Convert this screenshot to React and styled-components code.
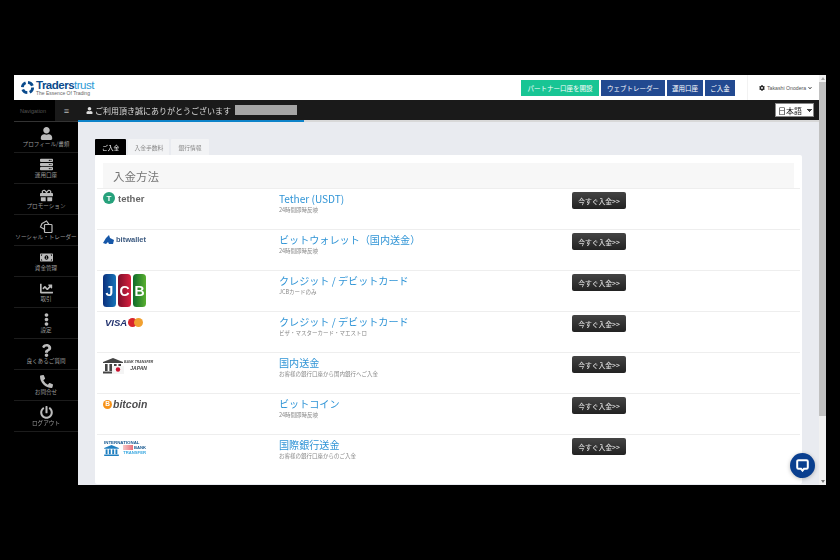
import React from "react";
import styled, { createGlobalStyle } from "styled-components";
import {
  FaUser, FaServer, FaGift, FaMoneyBillAlt, FaChartLine,
  FaEllipsisV, FaQuestion, FaPhoneAlt, FaPowerOff, FaCog, FaChevronDown,
} from "react-icons/fa";

const GlobalStyle = createGlobalStyle`
  html, body {
    margin: 0;
    padding: 0;
    background: #000;
    overflow: hidden;
  }
  * { box-sizing: border-box; }
`;

const font = `"Noto Sans CJK JP", "Noto Sans", "Liberation Sans", sans-serif`;

const Letterbox = styled.div`
  width: 840px;
  height: 560px;
  padding: 75px 14px;
  background: #000;
  font-family: ${font};
`;

const Screen = styled.div`
  position: relative;
  width: 812px;
  height: 410px;
  display: flex;
  overflow: hidden;
  filter: blur(0.35px);
`;

const Main = styled.div`
  flex: 1;
  display: flex;
  flex-direction: column;
  min-width: 0;
`;

const Body = styled.div`
  flex: 1;
  display: flex;
  min-height: 0;
`;

const Page = styled.div`
  flex: 1;
  display: flex;
  flex-direction: column;
  min-width: 0;
`;

const Scrollbar = styled.div`
  width: 7px;
  background: #f1f1f1;
  display: flex;
  flex-direction: column;
  align-items: center;
  padding-top: 2px;
`;

const Arrow = styled.div`
  width: 0;
  height: 0;
  border-left: 2px solid transparent;
  border-right: 2px solid transparent;
  ${(p) => (p.$down ? "border-top: 3px solid #777; margin-top: auto; margin-bottom: 2px;" : "border-bottom: 3px solid #aaa;")}
`;

const Thumb = styled.div`
  width: 7px;
  height: 334px;
  margin-top: 2px;
  background: #c1c1c1;
`;

const Header = styled.div`
  height: 25px;
  flex-shrink: 0;
  background: #fff;
  display: flex;
  align-items: center;
  padding-left: 6px;
`;

const Logo = styled.div`
  display: flex;
  align-items: center;
  gap: 1px;
`;

const LogoText = styled.div`
  display: flex;
  flex-direction: column;
  font-family: "Liberation Sans", sans-serif;
`;

const LogoName = styled.span`
  font-size: 11.5px;
  line-height: 13px;
  height: 11px;
  font-weight: 700;
  letter-spacing: -0.5px;
  color: #0a4a8c;
  span { color: #2b9ad6; font-weight: 400; }
`;

const LogoTag = styled.span`
  font-size: 5px;
  line-height: 6px;
  color: #666;
`;

const HeaderRight = styled.div`
  margin-left: auto;
  display: flex;
  align-items: center;
  gap: 2px;
  height: 100%;
`;

const HeaderButton = styled.div`
  width: ${(p) => p.$w}px;
  height: 16px;
  background: ${(p) => p.$bg || "#17408b"};
  color: #fff;
  opacity: 0.95;
  font-size: 6.5px;
  display: flex;
  align-items: center;
  justify-content: center;
  white-space: nowrap;
`;

const UserMenu = styled.div`
  width: 72px;
  height: 100%;
  margin-left: 10px;
  padding-left: 11px;
  border-left: 1px solid #f2f2f2;
  display: flex;
  align-items: center;
  gap: 2px;
  font-size: 5.2px;
  color: #555;
  font-family: "Liberation Sans", sans-serif;
  white-space: nowrap;
  svg { color: #222; flex-shrink: 0; }
`;

const TopBar = styled.div`
  height: 22px;
  flex-shrink: 0;
  background: #1a1a1a;
  display: flex;
  align-items: center;
  padding: 0 5px 0 8px;
  color: #ddd;
  font-size: 8px;
  gap: 2px;
  border-bottom: 2px solid #d8d8d8;
  position: relative;
  &::after {
    content: "";
    position: absolute;
    left: 0;
    bottom: -2px;
    width: 226px;
    height: 2px;
    background: #0d83c9;
  }
`;

const Redacted = styled.span`
  width: 62px;
  height: 10px;
  margin-left: 2px;
  background: #a5a5a5;
`;

const LangSelect = styled.select`
  appearance: none;
  margin-left: auto;
  width: 39px;
  height: 14px;
  padding: 0 0 0 2px;
  font-family: ${font};
  font-size: 8px;
  border: 1px solid #888;
  border-radius: 0;
  color: #222;
  background:
    linear-gradient(45deg, transparent 50%, #444 50%) right 4px center / 3px 3px no-repeat,
    linear-gradient(-45deg, transparent 50%, #444 50%) right 1px center / 3px 3px no-repeat,
    #fff;
`;

const Sidebar = styled.div`
  width: 64px;
  flex-shrink: 0;
  background: #000;
  display: flex;
  flex-direction: column;
`;

const SideTop = styled.div`
  height: 22px;
  display: flex;
  color: #555;
  font-size: 5.5px;
  font-family: "Liberation Sans", sans-serif;
  border-bottom: 1px solid #333;
`;

const SideLabel = styled.div`
  width: 41px;
  display: flex;
  align-items: center;
  padding-left: 6px;
`;

const Burger = styled.div`
  flex: 1;
  background: #1a1a1a;
  display: flex;
  align-items: center;
  justify-content: center;
  color: #bbb;
  font-size: 9px;
`;

const SideItem = styled.div`
  height: 31px;
  border-bottom: 1px solid #1c1c1c;
  display: flex;
  flex-direction: column;
  align-items: center;
  padding-top: 5px;
  color: #9a9a9a;
  font-size: 5.6px;
  line-height: 7px;
  white-space: nowrap;
  svg { color: #bcbcbc; display: block; height: 13px; margin-bottom: 1px; }
`;

const Content = styled.div`
  flex: 1;
  background: #e9ebf0;
  padding: 17px 17px 0;
  min-height: 0;
`;

const Tabs = styled.div`
  display: flex;
  gap: 2px;
`;

const Tab = styled.div`
  height: 16px;
  padding: 0 ${(p) => p.$pad}px;
  display: flex;
  align-items: center;
  font-size: 5.8px;
  border-radius: 1px 1px 0 0;
  background: ${(p) => (p.$active ? "#000" : "#f2f3f5")};
  color: ${(p) => (p.$active ? "#fff" : "#888")};
`;

const Panel = styled.div`
  background: #fff;
  height: 329px;
  padding: 8px 2px 0;
  border-radius: 2px;
`;

const Heading = styled.div`
  height: 25px;
  margin: 0 6px;
  padding-left: 10px;
  background: #f7f7f7;
  color: #777;
  font-size: 11.5px;
  display: flex;
  align-items: center;
`;

const Row = styled.div`
  height: 41px;
  border-top: 1px solid #eee;
  display: grid;
  grid-template-columns: 182px 293px 1fr;
  align-items: start;
`;

const LogoCell = styled.div`
  padding: 3px 0 0 6px;
`;

const Method = styled.div`
  padding-top: 2px;
`;

const MethodTitle = styled.div`
  color: #2f94d6;
  font-size: 10.1px;
  line-height: 15px;
`;

const MethodSub = styled.div`
  color: #888;
  font-size: 5.5px;
  line-height: 8px;
`;

const DepositButton = styled.div`
  margin-top: 3px;
  width: 54px;
  height: 17px;
  background: linear-gradient(#444, #222);
  border-radius: 2px;
  color: #d8d8d8;
  font-size: 6.8px;
  font-weight: 500;
  display: flex;
  align-items: center;
  justify-content: center;
`;

const TetherLogo = styled.div`
  display: flex;
  align-items: center;
  gap: 3px;
  font-family: "Liberation Sans", sans-serif;
  font-size: 9.5px;
  font-weight: 700;
  color: #666;
`;

const TetherMark = styled.span`
  width: 12px;
  height: 12px;
  border-radius: 50%;
  background: #26a17b;
  color: #fff;
  font-size: 8px;
  display: flex;
  align-items: center;
  justify-content: center;
`;

const WalletLogo = styled.div`
  display: flex;
  align-items: center;
  gap: 2px;
  margin-top: 2px;
  font-family: "Liberation Sans", sans-serif;
  font-size: 7.5px;
  font-weight: 700;
  color: #3c5a80;
`;

const VisaLogo = styled.div`
  display: flex;
  align-items: center;
  gap: 1px;
  margin: 2px 0 0 2px;
  font-family: "Liberation Sans", sans-serif;
  font-size: 9.5px;
  font-style: italic;
  font-weight: 700;
  color: #23336f;
`;

const BankLogo = styled.div`
  display: flex;
  align-items: flex-start;
  margin-top: 2px;
  font-family: "Liberation Sans", sans-serif;
  font-size: 3.4px;
  font-weight: 700;
  font-style: italic;
  color: #444;
  line-height: 5px;
  text-align: center;
  white-space: nowrap;
`;

const BankCaption = styled.div`
  margin-top: 2px;
`;

const BankCountry = styled.div`
  font-size: 5px;
  line-height: 6px;
`;

const BtcLogo = styled.div`
  display: flex;
  align-items: center;
  gap: 1px;
  margin-top: 1px;
  font-family: "Liberation Sans", sans-serif;
  font-size: 10.5px;
  font-style: italic;
  font-weight: 700;
  color: #4d4d4f;
  line-height: 12px;
`;

const BtcMark = styled.span`
  width: 9px;
  height: 9px;
  border-radius: 50%;
  background: #f7931a;
  color: #fff;
  font-size: 6.5px;
  font-style: normal;
  display: flex;
  align-items: center;
  justify-content: center;
`;

const IntlLogo = styled.div`
  width: 42px;
  margin: 2px 0 0 1px;
  font-family: "Liberation Sans", sans-serif;
  font-weight: 700;
  font-size: 4.4px;
  line-height: 5px;
  color: #17588f;
  white-space: nowrap;
`;

const IntlBody = styled.div`
  display: flex;
  justify-content: space-between;
  font-size: 4.2px;
  text-align: right;
`;

const IntlBank = styled.div`
  background: linear-gradient(90deg, #f8c8c8, #e8707a) left center / 10px 100% no-repeat;
`;

const IntlBlue = styled.div`
  color: #37a7e0;
`;

const ChatBubble = styled.div`
  position: absolute;
  right: 11px;
  bottom: 7px;
  width: 25px;
  height: 25px;
  border-radius: 50%;
  background: #0a3f8f;
  box-shadow: 0 1px 4px rgba(0, 0, 0, 0.25);
  display: flex;
  align-items: center;
  justify-content: center;
`;

const CreditLogo = () => (
  <svg width="43" height="33" viewBox="0 0 43 33" style={{ display: "block" }}>
    <defs>
      <linearGradient id="jb" x1="0" x2="1"><stop offset="0" stopColor="#0b2f7d" /><stop offset="1" stopColor="#1674b8" /></linearGradient>
      <linearGradient id="jr" x1="0" x2="1"><stop offset="0" stopColor="#7d0f2a" /><stop offset="1" stopColor="#d8203f" /></linearGradient>
      <linearGradient id="jg" x1="0" x2="1"><stop offset="0" stopColor="#0f6a2c" /><stop offset="1" stopColor="#59b02f" /></linearGradient>
    </defs>
    <rect x="0" width="13" height="33" rx="3.5" fill="url(#jb)" />
    <rect x="15" width="13" height="33" rx="3.5" fill="url(#jr)" />
    <rect x="30" width="13" height="33" rx="3.5" fill="url(#jg)" />
    <text x="6.5" y="22" textAnchor="middle" fontFamily="Liberation Sans" fontWeight="700" fontSize="14" fill="#fff">J</text>
    <text x="21.5" y="22" textAnchor="middle" fontFamily="Liberation Sans" fontWeight="700" fontSize="14" fill="#fff">C</text>
    <text x="36.5" y="22" textAnchor="middle" fontFamily="Liberation Sans" fontWeight="700" fontSize="14" fill="#fff">B</text>
  </svg>
);

const SocialIcon = () => (
  <svg width="14" height="13" viewBox="0 0 14 13" fill="none" stroke="#bcbcbc" strokeWidth="1.2">
    <path d="M3 3.5 L7.5 1 L10 4.5 L5 9 L1.5 7 Z" />
    <rect x="5.5" y="4.5" width="7.5" height="8" rx="0.8" fill="#000" />
  </svg>
);

const methods = [
  {
    title: "Tether (USDT)",
    sub: "24時間即時反映",
    logo: (
      <TetherLogo>
        <TetherMark>T</TetherMark>tether
      </TetherLogo>
    ),
  },
  {
    title: "ビットウォレット（国内送金）",
    sub: "24時間即時反映",
    logo: (
      <WalletLogo>
        <svg width="11" height="9" viewBox="0 0 11 9">
          <path d="M0 8 L3 3 L6 0 L7 3 L11 5 L10 9 H6 L5 7 L3 9 Z" fill="#1657a8" />
        </svg>
        bitwallet
      </WalletLogo>
    ),
  },
  { title: "クレジット / デビットカード", sub: "JCBカードのみ", logo: <CreditLogo /> },
  {
    title: "クレジット / デビットカード",
    sub: "ビザ・マスターカード・マエストロ",
    logo: (
      <VisaLogo>
        VISA
        <svg width="15" height="9" viewBox="0 0 15 9">
          <circle cx="4.5" cy="4.5" r="4.5" fill="#d8242b" />
          <circle cx="10.5" cy="4.5" r="4.5" fill="#f1a030" />
        </svg>
      </VisaLogo>
    ),
  },
  {
    title: "国内送金",
    sub: "お客様の銀行口座から国内銀行へご入金",
    logo: (
      <BankLogo>
        <svg width="21" height="16" viewBox="0 0 21 16">
          <g fill="#444">
            <path d="M10 0 L20 4 V5 H0 V4 Z" />
            <rect x="2" y="6" width="2.6" height="7" />
            <rect x="6.4" y="6" width="2.6" height="7" />
            <rect x="11" y="6" width="2.6" height="7" />
            <rect x="15.4" y="6" width="2.6" height="7" />
            <rect x="0" y="13.5" width="14" height="2" />
          </g>
          <rect x="9" y="8" width="12" height="8" fill="#f4f4f4" />
          <circle cx="15" cy="11.5" r="2.2" fill="#c8102e" />
        </svg>
        <BankCaption>
          BANK TRANSFER
          <BankCountry>JAPAN</BankCountry>
        </BankCaption>
      </BankLogo>
    ),
  },
  {
    title: "ビットコイン",
    sub: "24時間即時反映",
    logo: (
      <BtcLogo>
        <BtcMark>B</BtcMark>bitcoin
      </BtcLogo>
    ),
  },
  {
    title: "国際銀行送金",
    sub: "お客様の銀行口座からのご入金",
    logo: (
      <IntlLogo>
        INTERNATIONAL
        <IntlBody>
          <svg width="15" height="11" viewBox="0 0 20 15" fill="#1f7fc0">
            <path d="M10 0 L20 4 V5 H0 V4 Z" />
            <rect x="2" y="6" width="2.6" height="6.5" />
            <rect x="6.4" y="6" width="2.6" height="6.5" />
            <rect x="11" y="6" width="2.6" height="6.5" />
            <rect x="15.4" y="6" width="2.6" height="6.5" />
            <rect x="0" y="13" width="20" height="2" />
          </svg>
          <div>
            <IntlBank>BANK</IntlBank>
            <IntlBlue>TRANSFER</IntlBlue>
          </div>
        </IntlBody>
      </IntlLogo>
    ),
  },
];

const navItems = [
  { label: "プロフィール/書類", icon: <FaUser size={13} /> },
  { label: "運用口座", icon: <FaServer size={13} /> },
  { label: "プロモーション", icon: <FaGift size={13} /> },
  { label: "ソーシャル・トレーダー", icon: <SocialIcon /> },
  { label: "資金管理", icon: <FaMoneyBillAlt size={13} /> },
  { label: "取引", icon: <FaChartLine size={13} /> },
  { label: "設定", icon: <FaEllipsisV size={13} /> },
  { label: "良くあるご質問", icon: <FaQuestion size={13} /> },
  { label: "お問合せ", icon: <FaPhoneAlt size={13} /> },
  { label: "ログアウト", icon: <FaPowerOff size={13} /> },
];

export default function App() {
  return (
    <Letterbox>
      <GlobalStyle />
      <Screen>
        <Main>
          <Header>
            <Logo>
              <svg width="15" height="15" viewBox="0 0 16 16" fill="none">
                <circle cx="8" cy="8" r="5.5" stroke="#0a4a8c" strokeWidth="3" strokeDasharray="6 2.6" />
              </svg>
              <LogoText>
                <LogoName>
                  Traders<span>trust</span>
                </LogoName>
                <LogoTag>The Essence Of Trading</LogoTag>
              </LogoText>
            </Logo>
            <HeaderRight>
              <HeaderButton $bg="#0cc28f" $w={78}>パートナー口座を開設</HeaderButton>
              <HeaderButton $w={64}>ウェブトレーダー</HeaderButton>
              <HeaderButton $w={36}>運用口座</HeaderButton>
              <HeaderButton $w={30}>ご入金</HeaderButton>
              <UserMenu>
                <FaCog size={6} />
                Takashi Onodera
                <FaChevronDown size={4} />
              </UserMenu>
            </HeaderRight>
          </Header>
          <Body>
            <Sidebar>
              <SideTop>
                <SideLabel>Navigation</SideLabel>
                <Burger>≡</Burger>
              </SideTop>
              {navItems.map(({ label, icon }) => (
                <SideItem key={label}>
                  {icon}
                  {label}
                </SideItem>
              ))}
            </Sidebar>
            <Page>
              <TopBar>
                <FaUser size={7} />
                ご利用頂き誠にありがとうございます
                <Redacted />
                <LangSelect defaultValue="ja">
                  <option value="ja">日本語</option>
                </LangSelect>
              </TopBar>
              <Content>
                <Tabs>
                  <Tab $active $pad={7}>ご入金</Tab>
                  <Tab $pad={6}>入金手数料</Tab>
                  <Tab $pad={7}>銀行情報</Tab>
                </Tabs>
                <Panel>
                  <Heading>入金方法</Heading>
                  {methods.map((m, i) => (
                    <Row key={i}>
                      <LogoCell>{m.logo}</LogoCell>
                      <Method>
                        <MethodTitle>{m.title}</MethodTitle>
                        <MethodSub>{m.sub}</MethodSub>
                      </Method>
                      <DepositButton>今すぐ入金&gt;&gt;</DepositButton>
                    </Row>
                  ))}
                </Panel>
              </Content>
            </Page>
          </Body>
        </Main>
        <Scrollbar>
          <Arrow />
          <Thumb />
          <Arrow $down />
        </Scrollbar>
        <ChatBubble>
          <svg width="13" height="13" viewBox="0 0 13 13" fill="none">
            <path d="M2.5 1.2 H10.5 A1.3 1.3 0 0 1 11.8 2.5 V8.5 A1.3 1.3 0 0 1 10.5 9.8 H8 L6.5 11.6 L5 9.8 H2.5 A1.3 1.3 0 0 1 1.2 8.5 V2.5 A1.3 1.3 0 0 1 2.5 1.2 Z" stroke="#fff" strokeWidth="2" />
          </svg>
        </ChatBubble>
      </Screen>
    </Letterbox>
  );
}
